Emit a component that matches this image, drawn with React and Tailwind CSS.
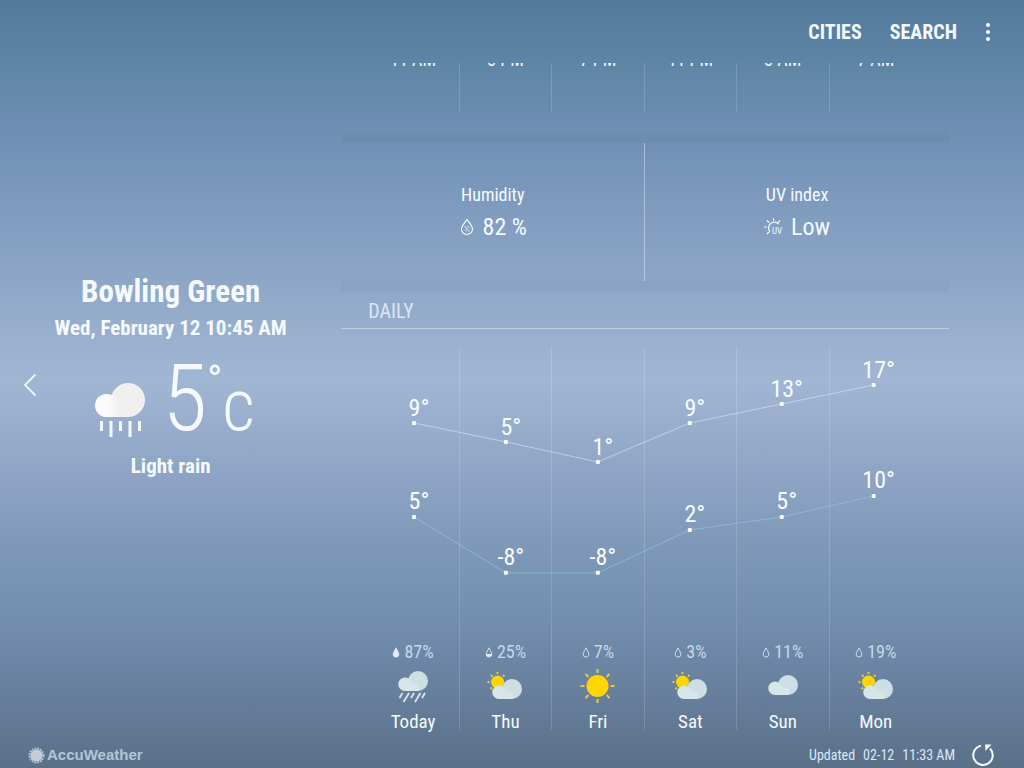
import React from 'react';

const hours = ['11 AM', '3 PM', '7 PM', '11 PM', '3 AM', '7 AM'];

const days = [
  { name: 'Today', rain: 87, icon: 'rain', high: 9, low: 5, highY: 76, lowY: 170 },
  { name: 'Thu', rain: 25, icon: 'partly', high: 5, low: -8, highY: 95, lowY: 226 },
  { name: 'Fri', rain: 7, icon: 'sun', high: 1, low: -8, highY: 115, lowY: 226 },
  { name: 'Sat', rain: 3, icon: 'partly', high: 9, low: 2, highY: 76, lowY: 183 },
  { name: 'Sun', rain: 11, icon: 'cloud', high: 13, low: 5, highY: 57, lowY: 170 },
  { name: 'Mon', rain: 19, icon: 'partly', high: 17, low: 10, highY: 38, lowY: 149 }
];

const pointX = (i) => 47 + i * 92;

function CloudShape() {
  return (
    <g>
      <circle cx="20" cy="10" r="10" fill="#cddfe3" />
      <path d="M7 6.5a6.7 6.7 0 0 0 0 13.5h14v-6.5c-3 0-6-1-7.500-2.500A7 7 0 0 0 7 6.5Z" fill="#d6e6e9" />
    </g>
  );
}

function WeatherIcon({ type }) {
  if (type === 'sun') {
    return (
      <svg width="36" height="36" viewBox="0 0 36 36" aria-hidden="true">
        <circle cx="17.500" cy="18" r="11" fill="#ffd500" />
        <path
          d="M17.500 1v4M17.500 31v4M.5 18h4M30.500 18h4M5.500 6l3 3M26.500 27l3 3M5.500 30l3-3M26.500 9l3-3"
          stroke="#e6cc3c"
          strokeWidth="2"
        />
      </svg>
    );
  }

  return (
    <svg width="36" height="36" viewBox="0 0 36 36" aria-hidden="true">
      {type === 'partly' && (
        <g>
          <circle cx="10.500" cy="14" r="6.500" fill="#ffd500" />
          <path
            d="M10.500 4v2M4 7l1.500 1.500M17.500 7 16 8.500M.5 14h2M3.500 21 5 19.500"
            stroke="#e6cc3c"
            strokeWidth="2"
          />
          <g transform="translate(5 11)">
            <CloudShape />
          </g>
        </g>
      )}
      {type === 'cloud' && (
        <g transform="translate(3 7)">
          <CloudShape />
        </g>
      )}
      {type === 'rain' && (
        <g>
          <g transform="translate(3 3)">
            <CloudShape />
          </g>
          <path
            d="M7.500 25l-3 5M14 25l-5.500 9M19 25l-3 5M25.500 25l-5.500 9M30 25l-3 5"
            stroke="#dbe6ee"
            strokeWidth="1.800"
          />
        </g>
      )}
    </svg>
  );
}

function Drop({ amount }) {
  const shape = 'M4 .8C4.800 3 6.800 5 6.800 7.300a2.800 2.800 0 0 1-5.600 0C1.200 5 3.200 3 4 .8Z';
  return (
    <svg width="8" height="11" viewBox="0 0 8 11" aria-hidden="true">
      <path d={shape} fill={amount > 50 ? '#e3edf8' : 'none'} stroke="#dbe5f2" strokeWidth=".9" />
      {amount > 20 && <path d="M1.200 7h5.600a2.800 2.800 0 0 1-5.600 0Z" fill="#e3edf8" />}
    </svg>
  );
}

function Header() {
  return (
    <header className="flex h-[63px] shrink-0 items-center justify-end gap-7 pr-[33px] text-xl font-bold text-[#f2f9ff]">
      <button type="button">CITIES</button>
      <button type="button">SEARCH</button>
      <button type="button" aria-label="More options">
        <svg width="6" height="20" viewBox="0 0 6 20" fill="currentColor">
          <circle cx="3" cy="3" r="2" />
          <circle cx="3" cy="10" r="2" />
          <circle cx="3" cy="17" r="2" />
        </svg>
      </button>
    </header>
  );
}

function CurrentWeather() {
  return (
    <aside className="flex w-1/3 shrink-0 items-center pb-6">
      <button type="button" aria-label="Previous city" className="flex w-12 shrink-0 justify-center pl-3">
        <svg width="16" height="24" viewBox="0 0 16 24" fill="none" stroke="#edf4fc" strokeWidth="1.800">
          <path d="M13.500 1.500 3 12l10.500 10.500" />
        </svg>
      </button>
      <div className="flex flex-1 flex-col items-center whitespace-nowrap pb-4 pr-12 font-bold text-[#f4faff]">
        <h1 className="text-[31px] leading-9">Bowling Green</h1>
        <p className="mt-1 text-[21px] leading-7">Wed, February 12 10:45 AM</p>
        <div className="mb-1.5 mt-6 flex h-20 items-end gap-4 pl-2">
          <svg width="52" height="56" viewBox="0 0 52 56" className="mb-2" aria-hidden="true">
            <defs>
              <linearGradient id="small" x1="0" y1="0" x2="1" y2="0">
                <stop offset=".5" stopColor="#fbfbfc" />
                <stop offset="1" stopColor="#f1f0f0" />
              </linearGradient>
            </defs>
            <path d="M34 1a17 17 0 0 1 0 34H13V14h4.500A17 17 0 0 1 34 1Z" fill="#f1f0ef" />
            <path d="M12.500 12a11.500 11.500 0 0 0 0 23h14V22c-2-7-8-10-14-10Z" fill="url(#small)" />
            <path d="M7.500 39v10M17 39v16M26.500 39v10M36 39v16M45.500 39v10" stroke="#f4faff" strokeWidth="3" />
          </svg>
          <p className="flex items-baseline font-light leading-[80px]">
            <span className="text-[92px]">5</span>
            <span className="self-start text-[40px] font-normal leading-[44px]">°</span>
            <span className="text-[72px]">c</span>
          </p>
        </div>
        <p className="text-[21px] leading-7">Light rain</p>
      </div>
    </aside>
  );
}

function Hourly() {
  return (
    <div className="flex h-[50px] items-end overflow-hidden pl-[26px] pr-[27px]">
      <ul className="grid flex-1 grid-cols-6 text-lg leading-6 text-[#f2f9ff]">
        {hours.map((hour) => (
          <li key={hour} className="border-r border-white/15 pb-[41px] text-center last:border-r-0">
            {hour}
          </li>
        ))}
      </ul>
    </div>
  );
}

function Details() {
  return (
    <div className="grid h-[138px] grid-cols-2 text-[#f4faff]">
      <div className="flex flex-col items-center justify-center border-r border-white/40 pt-px">
        <p className="text-lg leading-7">Humidity</p>
        <p className="flex items-center gap-2 text-2xl leading-9">
          <svg width="16" height="18" viewBox="0 0 16 18" fill="none" stroke="currentColor" aria-hidden="true">
            <path d="M8 1.500c2 3 5.500 6 5.500 9.500a5.500 5.500 0 0 1-11 0C2.500 7.500 6 4.500 8 1.500Z" strokeWidth="1.200" />
            <path d="m5.500 8 5 5.500M6 11.500l2 2M8.500 8l2 2" strokeWidth=".9" />
          </svg>
          82 %
        </p>
      </div>
      <div className="flex flex-col items-center justify-center pt-px">
        <p className="text-lg leading-7">UV index</p>
        <p className="flex items-center gap-2 text-2xl leading-9">
          <svg width="19" height="18" viewBox="0 0 19 18" fill="none" stroke="currentColor" strokeWidth="1.200" aria-hidden="true">
            <path d="M6 13.500A5.500 5.500 0 0 1 14.500 6M9.500 0v3M0 9h3M3 2.500 5 4.500M16 2.500 14 4.500M3 16l2-2" />
            <text x="8" y="16" fontSize="9" fill="currentColor" stroke="none">UV</text>
          </svg>
          Low
        </p>
      </div>
    </div>
  );
}

function Chart() {
  return (
    <svg viewBox="0 0 555 383" className="absolute inset-x-0 top-0 w-full" fill="none">
      <polyline
        points={days.map((d, i) => `${pointX(i)},${d.highY}`).join(' ')}
        stroke="#d5e2f5"
        strokeOpacity=".65"
      />
      <polyline
        points={days.map((d, i) => `${pointX(i)},${d.lowY}`).join(' ')}
        stroke="#8cc5dc"
        strokeOpacity=".7"
      />
      {days.map((d, i) => (
        <g key={d.name} fill="#f8fcff" fontSize="24" textAnchor="middle">
          <rect x={pointX(i) - 2} y={d.highY - 2} width="4" height="4" rx="1" />
          <rect x={pointX(i) - 2} y={d.lowY - 2} width="4" height="4" rx="1" />
          <text x={pointX(i) + 5} y={d.highY - 7}>{d.high}°</text>
          <text x={pointX(i) + 5} y={d.lowY - 8}>{d.low}°</text>
        </g>
      ))}
    </svg>
  );
}

function Daily() {
  return (
    <div className="relative ml-[26px] mr-[27px] mt-[18px] h-[383px]">
      <ul className="grid h-full grid-cols-6">
        {days.map((day) => (
          <li
            key={day.name}
            className="flex flex-col items-center justify-end border-r border-white/15 last:border-r-0"
          >
            <p className="mb-0.5 flex items-center gap-1 text-lg leading-7 text-[#c9d7e8]">
              <Drop amount={day.rain} />
              {day.rain}%
            </p>
            <WeatherIcon type={day.icon} />
            <p className="mt-2.5 text-[19px] leading-4 text-[#f4faff]">{day.name}</p>
          </li>
        ))}
      </ul>
      <Chart />
    </div>
  );
}

function Footer() {
  return (
    <footer className="flex h-[38px] shrink-0 items-center justify-between pl-7 pr-[29px] pt-3">
      <a href="#accuweather" className="flex items-center gap-0.5 font-['Liberation_Sans',sans-serif] text-[15px] font-bold text-[#b3c6d8]">
        <svg width="17" height="17" viewBox="0 0 17 17" aria-hidden="true">
          <circle cx="8.500" cy="8.500" r="7" fill="none" stroke="#b3c6d8" strokeWidth="2" strokeDasharray="1.800 1" />
          <circle cx="8.500" cy="8.500" r="6" fill="#c3ced7" />
        </svg>
        AccuWeather
      </a>
      <div className="flex items-center gap-4 text-sm text-[#dbe8f5]">
        <p className="flex gap-2">
          <span>Updated</span>
          <span>02-12</span>
          <span>11:33 AM</span>
        </p>
        <button type="button" aria-label="Refresh">
          <svg width="24" height="24" viewBox="0 0 24 24" fill="none" stroke="#f4faff" strokeWidth="2">
            <path d="M10 2.700A9.700 9.700 0 1 0 19 5.500" />
            <path d="M14 1.500h6.500L14.500 8Z" fill="#f4faff" stroke="none" />
          </svg>
        </button>
      </div>
    </footer>
  );
}

export default function App() {
  return (
    <div className="flex min-h-screen flex-col bg-[linear-gradient(to_bottom,#527a9b_0%,#6086a6_9%,#7090b5_18%,#8fa7c7_37%,#a1b6d3_49.5%,#8ea4c4_62%,#7c96b6_73%,#728cad_82%,#5a7089_100%)] font-['Roboto_Condensed',Roboto,sans-serif]">
      <Header />
      <main className="flex flex-1">
        <CurrentWeather />
        <section className="flex-1 pr-[75px]">
          <Hourly />
          <div className="mt-[19px] h-[11px] bg-[#6d8bab]/70" />
          <Details />
          <div className="h-[11px] bg-[#809dbf]/40" />
          <h2 className="h-[37px] border-b border-white/40 pl-[27px] text-xl leading-[38px] text-[#dce6f5]">DAILY</h2>
          <Daily />
        </section>
      </main>
      <Footer />
    </div>
  );
}
